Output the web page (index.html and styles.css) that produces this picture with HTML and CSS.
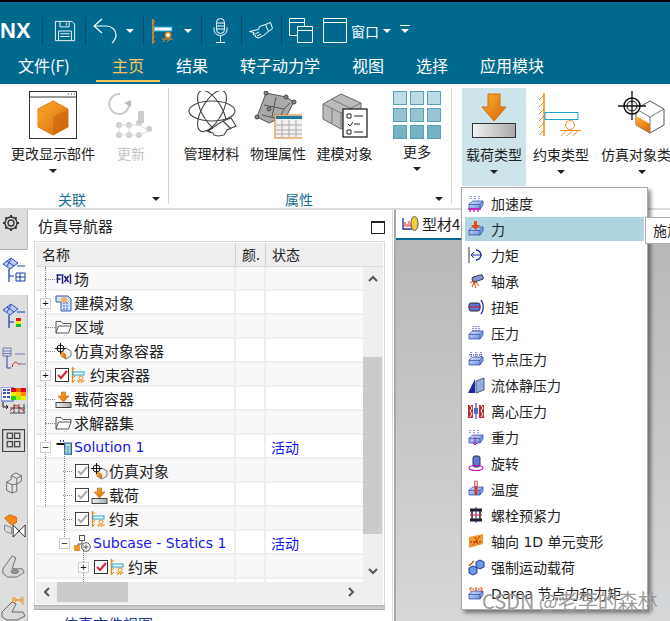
FILE: index.html
```html
<!DOCTYPE html>
<html lang="zh">
<head>
<meta charset="utf-8">
<title>NX</title>
<link rel="stylesheet" href="styles.css">
</head>
<body>
<svg class="defs" width="0" height="0">
  <defs>
    <linearGradient id="gOrange" x1="0" y1="0" x2="1" y2="1"><stop offset="0" stop-color="#fbb02a"/><stop offset="1" stop-color="#d9640c"/></linearGradient>
    <linearGradient id="gGray" x1="0" y1="0" x2="1" y2="0"><stop offset="0" stop-color="#f2f2f2"/><stop offset="1" stop-color="#a9a9a9"/></linearGradient>
    <linearGradient id="gBlue" x1="0" y1="0" x2="1" y2="1"><stop offset="0" stop-color="#dfe8fb"/><stop offset="1" stop-color="#5e80d6"/></linearGradient>
    <symbol id="box" viewBox="0 0 16 16"><path d="M1 9 5 6h10v4l-3 4H1z" fill="url(#gBlue)" stroke="#3355aa" stroke-width=".8"/><path d="M1 9.500h11l3-3.500M12 9.500V14" fill="none" stroke="#3355aa" stroke-width=".8"/></symbol>
    <symbol id="tcheck" viewBox="0 0 15 15"><rect x=".5" y=".5" width="13" height="13" fill="#fff" stroke="#333"/><path d="M3 7l3 3 6-7" fill="none" stroke="#e0203a" stroke-width="2.200"/></symbol>
    <symbol id="gcheck" viewBox="0 0 15 15"><rect x=".5" y=".5" width="13" height="13" fill="#fff" stroke="#444"/><path d="M3 7l3 3 6-7" fill="none" stroke="#b0b0b0" stroke-width="2.200"/></symbol>
    <symbol id="constraint" viewBox="0 0 15 17"><path d="M1.500 0v16" stroke="#ee8a1c" stroke-width="1.400"/><path d="M1 4 4 1M1 8l3-3M1 12l3-3M1 16l3-3" stroke="#ee8a1c"/><rect x="2" y="5" width="11" height="3" fill="#fff" stroke="#18a5c8"/><circle cx="10" cy="11" r="2" fill="none" stroke="#ee8a1c"/><path d="M6 14h8M7 16l2-2M10 16l2-2" stroke="#ee8a1c"/></symbol>
    <symbol id="load" viewBox="0 0 17 17"><path d="M6.500 1h4v4H14l-5.500 6L3 5h3.500z" fill="url(#gOrange)" stroke="#c85f10" stroke-width=".6"/><rect x="1" y="11.500" width="15" height="5" fill="url(#gGray)" stroke="#444"/></symbol>
    <symbol id="folder" viewBox="0 0 17 14"><path d="M1 13V1.500h5l2 2h8V6M1 13l2.500-7H16l-2.500 7z" fill="#fff" stroke="#555"/></symbol>
    <symbol id="simobj" viewBox="0 0 17 17"><path d="M11 5l5 3v5l-5 3-5-3V8z" fill="#eee" stroke="#777"/><path d="M6 8l5 3v5l-5-3z" fill="url(#gOrange)"/><circle cx="5.500" cy="5.500" r="3.500" fill="#fff" stroke="#111"/><path d="M5.500 0v11M0 5.500h11" stroke="#111"/></symbol>
  </defs>
</svg>

<div class="app">
  <header class="topbar">
    <div class="quick">
      <span class="logo">NX</span><i class="qsep sep1"></i>
      <svg class="qi save" width="22" height="22" viewBox="0 0 24 24" fill="none" stroke="#fff"><path d="M1.500 1.500h18l3 3v18h-21z"/><path d="M6.500 1.500v6h10v-6M13.500 3v3M5 22V12h14v10M7 15h10M7 18h10"/></svg>
      <i class="qsep sep2"></i>
      <svg class="qi undo" width="24" height="26" viewBox="0 0 24 26" fill="none" stroke="#fff" stroke-width="1.200"><path d="M9 1 1 8l8 7M1 8h12c6 0 10 4 10 9 0 3-1 5-4 8"/></svg>
      <span class="caret wh c1"></span><i class="qsep sep3"></i>
      <svg class="qi qcon" width="23" height="26" viewBox="0 0 23 26"><path d="M2 1v24" stroke="#ef8a1d" stroke-width="1.500"/><path d="M1 6l3-3M1 11l3-3M1 16l3-3M1 21l3-3M1 26l3-3" stroke="#ef8a1d"/><rect x="3" y="9" width="18" height="4" fill="#fff" stroke="#12a8d8"/><circle cx="17" cy="17" r="2.500" fill="#fff" stroke="#ef8a1d" stroke-width="1.500"/><path d="M11 21h11M12 24l3-3M16 24l3-3" stroke="#ef8a1d"/></svg>
      <span class="caret wh c2"></span><i class="qsep sep4"></i>
      <svg class="qi mic" width="15" height="25" viewBox="0 0 15 25" fill="none" stroke="#fff"><rect x="3.500" y=".5" width="8" height="15" rx="4"/><path d="M3.500 5h8M3.500 8h8M3.500 11h8M1 9.500v2c0 3.500 3 6 6.500 6s6.500-2.500 6.500-6v-2M7.500 18v6M3 24.500h9"/></svg>
      <i class="qsep sep5"></i>
      <svg class="qi hand" width="24" height="17" viewBox="0 0 24 17" fill="none" stroke="#fff"><path d="M.5 9.500l9-2 1-3 6-2 3 7-5 4-5 2.500-3-1-.5-2-2-.5 1-2z"/><path d="M16.500 2.500l5-2 2 6-4 3M6 12l4-2M8 14l4-2"/></svg>
      <i class="qsep sep6"></i>
      <svg class="qi wins" width="24" height="25" viewBox="0 0 24 25" fill="#006a8e" stroke="#fff"><path d="M.5.500h15v17H.5zM.5 4.500h15"/><path d="M8.500 8.500h15v16h-15zM8.500 12.500h15"/></svg>
      <svg class="qi win" width="24" height="25" viewBox="0 0 24 25" fill="none" stroke="#fff"><path d="M.5.500h23v24H.5zM.5 4.500h23"/></svg>
      <span class="qtext">窗口</span>
      <span class="caret wh c3"></span>
      <span class="caret wh c4"></span>
    </div>
    <nav class="tabs">
      <span class="tab first">文件(F)</span>
      <span class="tab on">主页</span>
      <span class="tab">结果</span>
      <span class="tab">转子动力学</span>
      <span class="tab">视图</span>
      <span class="tab">选择</span>
      <span class="tab">应用模块</span>
    </nav>
  </header>

  <section class="ribbon">
    <div class="group g1">
      <div class="btns">
        <div class="rbtn w1">
          <svg class="ric" width="48" height="48" viewBox="0 0 48 48"><rect x=".5" y=".5" width="47" height="47" fill="#fff" stroke="#333"/><path d="M1 6h46" stroke="#333"/><path d="M39 3h1M42 3h1M45 3h1" stroke="#333"/><path d="M24 10l15 8v18l-15 8-15-8V18z" fill="url(#gOrange)" stroke="#e07a14"/><path d="M9 18l15 8 15-8M24 26v18" stroke="#e58a22" fill="none"/><path d="M24 26l15-8v18l-15 8z" fill="#c9620f" opacity=".6"/></svg>
          <span class="rlabel">更改显示部件</span><span class="caret"></span>
        </div>
        <div class="rbtn w2 dis">
          <svg class="ric" width="48" height="48" viewBox="0 0 48 48" fill="none"><path d="M22 11A10 10 0 1 1 13 3" stroke="#ccc" stroke-width="2"/><path d="M17 12l7-3 0 7z" fill="#bbb"/><g fill="#ccc"><circle cx="12" cy="34" r="3"/><circle cx="22" cy="34" r="3"/><circle cx="32" cy="32" r="3"/><circle cx="12" cy="44" r="3"/><circle cx="22" cy="44" r="3"/><circle cx="32" cy="44" r="3"/><circle cx="42" cy="38" r="3"/></g><path d="M12 34h20l10 6-10 4H12zM22 34v10" stroke="#ddd"/><rect x="31" y="20" width="6" height="12" fill="#ccc"/></svg>
          <span class="rlabel">更新</span>
        </div>
      </div>
      <div class="gfoot"><span class="gname n1">关联</span><span class="caret gc"></span></div>
    </div>
    <div class="group g2">
      <div class="btns">
        <div class="rbtn w3">
          <svg class="ric" width="50" height="48" viewBox="0 0 50 48" fill="none" stroke="#444" stroke-width="1.100"><ellipse cx="25" cy="20" rx="23" ry="10"/><ellipse cx="25" cy="20" rx="23" ry="10" transform="rotate(60 25 20)"/><ellipse cx="25" cy="20" rx="23" ry="10" transform="rotate(120 25 20)"/><path d="M21 40l10-7 5-3 8-3 5 8-9 4-3 5-6 1-4-1-1-2-4-1z" fill="#fff"/><path d="M26 37l-6 3 4 1M36 30l8 8"/></svg>
          <span class="rlabel">管理材料</span>
        </div>
        <div class="rbtn w4a">
          <svg class="ric" width="48" height="48" viewBox="0 0 48 48"><path d="M12 2 32 6l8 5-7 13-18 8-12-6z" fill="#aaa" stroke="#555"/><path d="M10 14l20 4 6-6M8 24l17 4 5-10M22 6l-4 20" stroke="#555" fill="none"/><g fill="#888" stroke="#444"><circle cx="12" cy="2" r="2"/><circle cx="32" cy="6" r="2"/><circle cx="40" cy="11" r="2"/><circle cx="3" cy="26" r="2"/><circle cx="15" cy="18" r="2"/></g><rect x="21" y="24" width="28" height="23" fill="#f1f1f1" stroke="#e07a24"/><rect x="22" y="25" width="26" height="3" fill="#1a7a9c"/><path d="M28 29v17M35 29v17M42 29v17M22 34h26M22 39h26M22 43h26" stroke="#aaa"/></svg>
          <span class="rlabel">物理属性</span>
        </div>
        <div class="rbtn w4">
          <svg class="ric" width="48" height="48" viewBox="0 0 48 48"><path d="M2 13 20 3l20 9v15L20 38 2 28z" fill="#bbb" stroke="#666"/><path d="M2 13l18 9 20-10M20 22v16M10 8l19 9M11 17v15M31 17v15" stroke="#777" fill="none"/><rect x="22" y="18" width="24" height="28" fill="#fff" stroke="#222" stroke-width="1.300"/><path d="M26 23h4v4h-4zM33 25h9M27 33l2 2 3-4M33 33h6M26 39h4v4h-4zM33 41h9" fill="none" stroke="#222"/></svg>
          <span class="rlabel">建模对象</span>
        </div>
        <div class="rbtn w5">
          <div class="ric more">
            <i></i><i></i><i></i><i class="m2"></i><i class="m2"></i><i class="m2"></i><i class="m3"></i><i class="m3"></i><i class="m3"></i>
          </div>
          <span class="rlabel up">更多</span><span class="caret"></span>
        </div>
      </div>
      <div class="gfoot"><span class="gname n2">属性</span><span class="caret gc"></span></div>
    </div>
    <div class="g3">
      <div class="rbtn w6 act">
        <svg class="ric" width="46" height="48" viewBox="0 0 46 48"><path d="M17 3h12v13h6L23 30 11 16h6z" fill="url(#gOrange)" stroke="#d46a10"/><rect x="1.500" y="32.500" width="43" height="14" fill="url(#gGray)" stroke="#333"/></svg>
        <span class="rlabel">载荷类型</span><span class="caret"></span>
      </div>
      <div class="rbtn w7">
        <svg class="ric" width="44" height="48" viewBox="0 0 44 48" fill="none"><path d="M5 2v43" stroke="#ef8a1d" stroke-width="1.500"/><path d="M0 9l5-5M0 16l5-5M0 23l5-5M0 30l5-5M0 37l5-5M0 44l5-5" stroke="#ef8a1d"/><rect x="6" y="21.500" width="33" height="7" fill="#fff" stroke="#18a5c8"/><circle cx="31" cy="34" r="4.500" stroke="#ef8a1d"/><path d="M21 39.500h21M22 45l5-5.500M28 45l5-5.500M34 45l5-5.500" stroke="#ef8a1d"/></svg>
        <span class="rlabel">约束类型</span><span class="caret"></span>
      </div>
      <div class="rbtn w8">
        <svg class="ric" width="48" height="48" viewBox="0 0 48 48" fill="none"><path d="M32 10l14 8v16l-14 8-14-8V18z" fill="#fff" stroke="#555"/><path d="M18 18l14 8 14-8M32 26v16" stroke="#777"/><path d="M18 25l14 8v9l-14-8z" fill="url(#gOrange)"/><circle cx="14" cy="15" r="8" fill="#fff" stroke="#111" stroke-width="1.500"/><circle cx="14" cy="15" r="5" stroke="#111"/><path d="M14 0v29M0 15h28" stroke="#111" stroke-width="1.300"/></svg>
        <span class="rlabel wide">仿真对象类</span><span class="caret"></span>
      </div>
    </div>
  </section>

  <main class="work">
    <aside class="rail">
      <div class="rtab gear"><svg width="18" height="18" viewBox="0 0 18 18" fill="none" stroke="#333" stroke-width="1.400"><circle cx="9" cy="9" r="3"/><circle cx="9" cy="9" r="6"/><path d="M9 1v2M9 15v2M1 9h2M15 9h2M3.400 3.400l1.400 1.400M13.200 13.200l1.400 1.400M3.400 14.600l1.400-1.400M13.200 4.800l1.400-1.400" stroke-width="2"/></svg></div>
      <div class="rtab sel"><svg width="24" height="26" viewBox="0 0 24 26" fill="none"><path d="M1 7l8-6 7 5-8 6z" fill="#b9c8f4" stroke="#2f4cc0"/><path d="M5 4l7 5M9 2 5 9" stroke="#2f4cc0"/><path d="M7 12v13M7 19h5M15 9h8" stroke="#1438a8" stroke-width="1.200"/><path d="M14 16h9v8h-9zM14 20h9M18 16v8" stroke="#1438a8"/></svg></div>
      <div class="rtab r3"><svg width="24" height="26" viewBox="0 0 24 26" fill="none"><path d="M1 7l8-6 7 5-8 6z" fill="#b9c8f4" stroke="#2f4cc0"/><path d="M5 4l7 5M9 2 5 9" stroke="#2f4cc0"/><path d="M7 12v13M7 19h5M15 9h8" stroke="#1438a8" stroke-width="1.200"/><path d="M14 15h5v3h-5z" fill="#e11"/><path d="M14 18h5v3h-5z" fill="#ee0"/><path d="M14 21h5v3h-5z" fill="#1b2"/></svg></div>
      <div class="rtab r4"><svg width="26" height="22" viewBox="0 0 26 22" fill="none"><path d="M2 1h8v8H2zM2 4h8M2 6.500h8M14 7h10M20 17h5" stroke="#6a7ab0"/><path d="M6 9v12h4" stroke="#2440b0"/><path d="M11 20c2-7 5-5 6-3h3" stroke="#b8282a"/></svg></div>
      <div class="rtab r5"><svg width="25" height="27" viewBox="0 0 25 27"><rect x="0" y="0" width="12" height="14" fill="#fff" stroke="#3355bb"/><path d="M2 3h8M2 6h8M2 10h8" stroke="#3355bb" stroke-width="2" stroke-dasharray="3 1"/><rect x="10" y="1" width="5" height="4" fill="#d02"/><rect x="15" y="1" width="5" height="4" fill="#e60"/><rect x="20" y="1" width="5" height="4" fill="#d02"/><rect x="10" y="5" width="5" height="4" fill="#ee0"/><rect x="15" y="5" width="5" height="4" fill="#fc0"/><rect x="20" y="5" width="5" height="4" fill="#f80"/><rect x="10" y="9" width="5" height="4" fill="#2c2"/><rect x="15" y="9" width="5" height="4" fill="#ae1"/><rect x="20" y="9" width="5" height="4" fill="#ee0"/><path d="M9 26h15M9 21h15M13 17v9M18 17v9M23 17v9" stroke="#444"/><path d="M9 24l6-6 4 3 4 3" stroke="#d11" fill="none"/><path d="M2 15v5h5M5 18l2 2-2 2" stroke="#111" fill="none"/></svg></div>
      <div class="rtab r6"><svg width="23" height="23" viewBox="0 0 22 22" fill="none" stroke="#444" stroke-width="1.200"><rect x=".6" y=".6" width="21" height="21"/><rect x="5" y="4" width="5" height="5"/><rect x="12" y="4" width="5" height="5"/><rect x="5" y="12" width="5" height="5"/><rect x="12" y="12" width="5" height="5"/></svg></div>
      <div class="rtab r7"><svg width="18" height="22" viewBox="0 0 18 24" fill="#e2e2e2" stroke="#666"><path d="M1 11 6 8V4l5-3 6 3v6l-5 3v8l-5 2-6-3z"/><path d="M6 4l6 3 5-3M12 7v6M1 11l6 3 5-1M7 14v9" fill="none"/></svg></div>
      <div class="rtab r8"><svg width="26" height="24" viewBox="0 0 26 28"><path d="M2 6l6-4 8 3v6l-6 3z" fill="#f2891a" stroke="#c56410"/><path d="M2 14l8 3v7l-6-2-2-2z" fill="#ddd" stroke="#777"/><path d="M12 14l14 14V14L12 28z" fill="#fff" stroke="#111"/></svg></div>
      <div class="rtab r9"><svg width="25" height="23" viewBox="0 0 25 25" fill="#d9d9d9" stroke="#666"><path d="M1 15 11 1l4 2-4 12 11 0 2 4-8 5H6l-5-4z"/><ellipse cx="14" cy="18" rx="4" ry="2" fill="#999"/></svg></div>
      <div class="rtab r10"><svg width="26" height="24" viewBox="0 0 26 24" fill="#d9d9d9" stroke="#666"><path d="M1 15 11 5l4 2-4 8 11 0 2 4-8 4H6l-5-3z"/><path d="M12 0v6M22 0v8M12 3h10M13 0l3 3-3 3M21 0l-3 3 3 3" stroke="#ef8a1d" fill="none"/></svg></div>
    </aside>

    <section class="nav">
      <div class="navhead"><span class="navtitle">仿真导航器</span><i class="maxi"></i></div>
      <div class="table">
        <div class="thead"><span class="c-name">名称</span><span class="c-col">颜.</span><span class="c-st">状态</span></div>
        <div class="tbody">
          <div class="rows">
            <div class="row alt"><div class="c-name tr l0"><i class="lnk"></i><svg width="17" height="12" viewBox="0 0 16 12" class="ico"><path d="M1 2h5M2 2v8M1 6h4M8 2H7v8h1M14 2h1v8h-1" stroke="#1c1c78" fill="none" stroke-width="1.400"/><path d="M9 3l4 6M13 3 9 9" stroke="#1c1c78" stroke-width="1.400"/></svg><span class="lbl">场</span></div><div class="c-col"></div><div class="c-st"></div></div>

            <div class="row"><div class="c-name tr l0"><b class="tog">+</b><svg width="17" height="17" viewBox="0 0 17 17" class="ico"><path d="M1 1h12l3 3v12H6V7H1z" fill="#cfe0fb" stroke="#3a5bb0"/><path d="M8 8h6M8 11h6M8 14h6" stroke="#3a5bb0" stroke-dasharray="2 1"/><circle cx="9" cy="5" r="3" fill="#f0b060"/></svg><span class="lbl">建模对象</span></div><div class="c-col"></div><div class="c-st"></div></div>

            <div class="row alt"><div class="c-name tr l0"><i class="lnk"></i><svg width="17" height="14" class="ico"><use href="#folder"/></svg><span class="lbl">区域</span></div><div class="c-col"></div><div class="c-st"></div></div>

            <div class="row"><div class="c-name tr l0"><i class="lnk"></i><svg width="17" height="17" class="ico"><use href="#simobj"/></svg><span class="lbl">仿真对象容器</span></div><div class="c-col"></div><div class="c-st"></div></div>

            <div class="row alt"><div class="c-name tr l0"><b class="tog">+</b><svg width="15" height="15" class="ico chk"><use href="#tcheck"/></svg><svg width="15" height="17" class="ico"><use href="#constraint"/></svg><span class="lbl lp">约束容器</span></div><div class="c-col"></div><div class="c-st"></div></div>

            <div class="row"><div class="c-name tr l0"><i class="lnk"></i><svg width="17" height="17" class="ico"><use href="#load"/></svg><span class="lbl">载荷容器</span></div><div class="c-col"></div><div class="c-st"></div></div>

            <div class="row alt"><div class="c-name tr l0"><i class="lnk"></i><svg width="17" height="14" class="ico"><use href="#folder"/></svg><span class="lbl">求解器集</span></div><div class="c-col"></div><div class="c-st"></div></div>

            <div class="row"><div class="c-name tr l0"><b class="tog minus">−</b><svg width="17" height="16" viewBox="0 0 16 16" class="ico"><path d="M1 5h8" stroke="#111" stroke-width="2"/><path d="M5 1v2M8 1v2" stroke="#2244bb"/><rect x="9" y="4" width="7" height="12" fill="#7fb6c8" stroke="#1a6a8a"/><path d="M10.500 6h4M10.500 9h1M13.500 9h1M10.500 12h1M13.500 12h1" stroke="#fff"/></svg><span class="lbl blue">Solution 1</span></div><div class="c-col"></div><div class="c-st blue">活动</div></div>

            <div class="row alt"><div class="c-name tr l1"><i class="lnk"></i><svg width="15" height="15" class="ico chk"><use href="#gcheck"/></svg><svg width="17" height="17" class="ico"><use href="#simobj"/></svg><span class="lbl ls">仿真对象</span></div><div class="c-col"></div><div class="c-st"></div></div>

            <div class="row"><div class="c-name tr l1"><i class="lnk"></i><svg width="15" height="15" class="ico chk"><use href="#gcheck"/></svg><svg width="17" height="17" class="ico"><use href="#load"/></svg><span class="lbl ls">载荷</span></div><div class="c-col"></div><div class="c-st"></div></div>

            <div class="row alt"><div class="c-name tr l1"><i class="lnk"></i><svg width="15" height="15" class="ico chk"><use href="#gcheck"/></svg><svg width="15" height="17" class="ico"><use href="#constraint"/></svg><span class="lbl lq">约束</span></div><div class="c-col"></div><div class="c-st"></div></div>

            <div class="row"><div class="c-name tr l2"><b class="tog minus">−</b><svg width="17" height="17" viewBox="0 0 17 17" class="ico" fill="none"><rect x="5.500" y=".5" width="5" height="5" stroke="#555"/><path d="M8 6v3H4v2" stroke="#555"/><rect x="0" y="10" width="6" height="6" fill="#f0962a"/><circle cx="12" cy="12" r="4.300" stroke="#555"/><path d="M12 9.500v5M9.500 12h5" stroke="#555"/></svg><span class="lbl blue">Subcase - Statics 1</span></div><div class="c-col"></div><div class="c-st blue">活动</div></div>

            <div class="row alt"><div class="c-name tr l3"><b class="tog">+</b><svg width="15" height="15" class="ico chk"><use href="#tcheck"/></svg><svg width="15" height="17" class="ico"><use href="#constraint"/></svg><span class="lbl lq">约束</span></div><div class="c-col"></div><div class="c-st"></div></div>
            <div class="row"><div class="c-name"></div><div class="c-col"></div><div class="c-st"></div></div>
            <i class="vguide v0"></i><i class="vguide v1"></i><i class="vguide v2"></i>
          </div>
          <div class="vscroll"><svg width="10" height="7" viewBox="0 0 10 7" class="sa t"><path d="M1 6l4-4 4 4" fill="none" stroke="#555" stroke-width="2"/></svg><i class="thumbv"></i><svg width="10" height="7" viewBox="0 0 10 7" class="sa b"><path d="M1 1l4 4 4-4" fill="none" stroke="#555" stroke-width="2"/></svg></div>
          <div class="hscroll"><svg width="7" height="10" viewBox="0 0 7 10"><path d="M6 1 2 5l4 4" fill="none" stroke="#555" stroke-width="2"/></svg><i class="thumbh"></i><svg width="7" height="10" viewBox="0 0 7 10"><path d="M1 1l4 4-4 4" fill="none" stroke="#555" stroke-width="2"/></svg></div>
        </div>
      </div>
      <div class="split"></div>
      <div class="navfoot">仿真文件视图</div>
    </section>

    <section class="view">
      <div class="vtab"><svg width="17" height="15" viewBox="0 0 17 15" class="vico"><path d="M1 2v11h9" stroke="#1c2a90" fill="none" stroke-width="1.300"/><path d="M3 11V6M5 11V8M7 11V5M9 11V7" stroke="#d22"/><ellipse cx="12.500" cy="7.500" rx="3.500" ry="7" fill="#f3cf3a" stroke="#555"/></svg><span>型材4</span></div>
      <div class="canvas"></div>
    </section>
  </main>

  <div class="menu">
    <div class="mi"><svg width="16" height="18" viewBox="0 0 16 16"><use href="#box"/><path d="M3 1v4M7 1v4M11 1v4" stroke="#2244bb" stroke-dasharray="1 1"/><path d="M2 14v3M6 14v3M10 14v3M0 14h13" stroke="#d010b0" stroke-width="1.300"/></svg><span>加速度</span></div>
    <div class="mi cur"><svg width="16" height="18" viewBox="0 0 16 16"><use href="#box"/><path d="M6 0h3v4h3L7.500 9 3 4h3z" fill="#e8491a"/></svg><span>力</span></div>
    <div class="mi"><svg width="16" height="18" viewBox="0 0 16 16" fill="none"><path d="M1 0v16" stroke="#999" stroke-width="2"/><path d="M4 8h10M6 5l-3 3 3 3" stroke="#1a2aa0"/><path d="M8 3a5 5 0 1 1 0 10" stroke="#1a2aa0" stroke-width="1.300"/></svg><span>力矩</span></div>
    <div class="mi"><svg width="16" height="18" viewBox="0 0 16 16" fill="none"><rect x="4" y="3" width="11" height="5" rx="2" fill="#7f97d8" stroke="#334" transform="rotate(-18 9 5)"/><path d="M2 10l3-2 3 2M4 14l2-5 2 6M11 13 8 9" stroke="#d04a1a"/></svg><span>轴承</span></div>
    <div class="mi"><svg width="16" height="18" viewBox="0 0 16 16" fill="none"><rect x="1" y="4" width="11" height="8" rx="2" fill="#5d73cf" stroke="#233"/><path d="M0 8h13" stroke="#d01a2a"/><path d="M13 1c3 4 3 10 0 14" stroke="#1a2aa0" stroke-width="1.300"/></svg><span>扭矩</span></div>
    <div class="mi"><svg width="16" height="18" viewBox="0 0 16 16"><use href="#box"/><path d="M5 1v5M8 1v5M11 1v5" stroke="#1a2aa0" stroke-dasharray="1 1"/></svg><span>压力</span></div>
    <div class="mi"><svg width="16" height="18" viewBox="0 0 16 16"><use href="#box"/><path d="M3 1v6M8 1v6M13 1v6M1 4h14" stroke="#1a2aa0" stroke-dasharray="1 1"/></svg><span>节点压力</span></div>
    <div class="mi"><svg width="16" height="18" viewBox="0 0 16 16"><path d="M8 4l8-3v12l-8 3z" fill="#8fb0dc" stroke="#557"/><path d="M0 16 7 2v14z" fill="#1a2a9a"/></svg><span>流体静压力</span></div>
    <div class="mi"><svg width="16" height="18" viewBox="0 0 16 16"><path d="M0 2h5v13H0zM11 2h5v13h-5z" fill="#b23030"/><path d="M2 14l2-3-2-3 2-3-2-3M13 14l2-3-2-3 2-3-2-3" stroke="#fff" fill="none"/><path d="M8 0v16" stroke="#1a2aa0"/><rect x="6" y="5" width="4" height="6" fill="#4a6ad0"/></svg><span>离心压力</span></div>
    <div class="mi"><svg width="16" height="18" viewBox="0 0 16 16"><use href="#box"/><path d="M2 1v4M6 1v4M10 1v4" stroke="#2244bb" stroke-dasharray="1 1"/><path d="M7 8v8M5 14l2 2 2-2" stroke="#c010a0" fill="none"/></svg><span>重力</span></div>
    <div class="mi"><svg width="16" height="18" viewBox="0 0 16 16" fill="none"><rect x="5" y="1" width="7" height="11" rx="2" fill="#6078d8" stroke="#334"/><ellipse cx="8" cy="13" rx="7" ry="2.500" stroke="#c010c0" stroke-width="1.200"/></svg><span>旋转</span></div>
    <div class="mi"><svg width="16" height="18" viewBox="0 0 16 16"><use href="#box"/><rect x="6.500" y="0" width="3" height="12" fill="#f0c0c0" stroke="#a44" stroke-width=".6"/><path d="M8 5v9" stroke="#d01020" stroke-width="1.500"/></svg><span>温度</span></div>
    <div class="mi"><svg width="16" height="18" viewBox="0 0 16 16" fill="none"><path d="M2 3h12M2 13h12" stroke="#222" stroke-width="3"/><rect x="4" y="3" width="8" height="10" stroke="#222" stroke-width="1.500"/><path d="M8 0v16" stroke="#1a2aa0"/><path d="M2 8h12" stroke="#d01a2a"/></svg><span>螺栓预紧力</span></div>
    <div class="mi"><svg width="16" height="18" viewBox="0 0 16 16"><path d="M1 4l14-3v10L1 15z" fill="#f09a2a"/><path d="M2 9h12M7 4l3 7M5 12l7-9" stroke="#c01a0a" stroke-dasharray="2 1"/></svg><span>轴向 1D 单元变形</span></div>
    <div class="mi"><svg width="16" height="18" viewBox="0 0 16 16"><path d="M1 9l4-2 4 2v5l-4 2-4-2zM8 3l4-2 4 2v5l-4 2-4-2z" fill="#6d9ae8" stroke="#223a90"/><path d="M1 7l5-5" stroke="#e04a10" stroke-width="1.500"/></svg><span>强制运动载荷</span></div>
    <div class="mi"><svg width="16" height="18" viewBox="0 0 16 16"><use href="#box"/><path d="M3 2v6M8 2v6M13 2v6M1 4h14" stroke="#d8400a" stroke-dasharray="2 1"/></svg><span>Darea 节点力和力矩</span></div>
  </div>
  <div class="tip">施加</div>
  <div class="mark">CSDN @老李的森林</div>
</div>
</body>
</html>
```
FILE: styles.css
```css
* { box-sizing: border-box; }
html, body { margin: 0; padding: 0; }
body { width: 670px; height: 621px; overflow: hidden; background: #fff; font-family: "Noto Sans CJK SC", "Liberation Sans", sans-serif; font-size: 14px; color: #222; }
i { display: block; font-style: normal; }
.defs { position: absolute; }
.app { position: relative; width: 670px; height: 621px; overflow: hidden; display: flex; flex-direction: column; }

.topbar { flex: none; height: 84px; background: #006a8e; border-top: 2px solid #000; color: #fff; }
.quick { height: 48px; display: flex; align-items: center; padding-top: 9px; }
.logo { width: 42px; flex: none; font: bold 22px "Liberation Sans", sans-serif; color: #fff; line-height: 24px; }
.qsep { width: 1px; height: 28px; background: #0a4a63; flex: none; }
.qi { flex: none; }
.save { margin-left: 11px; }
.sep2 { margin-left: 9px; }
.undo { margin-left: 7px; }
.c1 { margin-left: 9px; }
.sep3 { margin-left: 9px; }
.qcon { margin-left: 7px; }
.c2 { margin-left: 10px; }
.sep4 { margin-left: 9px; }
.mic { margin-left: 11px; }
.sep5 { margin-left: 13px; }
.hand { margin-left: 7px; }
.sep6 { margin-left: 8px; }
.wins { margin-left: 7px; }
.win { margin-left: 10px; }
.qtext { margin-left: 4px; font-size: 14px; color: #fff; line-height: 20px; flex: none; }
.c3 { margin-left: 4px; }
.c4 { margin-left: 10px; position: relative; }
.c4::before { content: ""; position: absolute; left: -5px; top: -8px; width: 10px; height: 1px; background: #fff; }

.caret { display: block; flex: none; width: 0; height: 0; border-left: 4px solid transparent; border-right: 4px solid transparent; border-top: 4px solid #222; }
.caret.wh { border-top-color: #fff; }

.tabs { height: 34px; display: flex; }
.tab { flex: none; padding: 0 16px; font-size: 16px; line-height: 30px; color: #fff; height: 32px; }
.tab.first { width: 96px; padding: 0 0 0 18px; white-space: nowrap; }
.tab.on { color: #f7c65a; border-bottom: 2px solid #f7c65a; }

.ribbon { flex: none; height: 124px; display: flex; background: #fff; padding-top: 4px; }
.group { flex: none; display: flex; flex-direction: column; border-right: 1px solid #d5d5d5; height: 116px; position: relative; }
.g1 { width: 169px; }
.g2 { width: 283px; }
.g3 { display: flex; flex: none; margin-left: 10px; }
.btns { display: flex; height: 98px; flex: none; }
.rbtn { display: flex; flex-direction: column; align-items: center; height: 98px; flex: none; }
.rbtn .ric { height: 48px; margin-top: 3px; flex: none; }
.rlabel { display: block; margin-top: 4px; height: 20px; line-height: 20px; font-size: 14px; white-space: nowrap; color: #222; }
.rlabel.up { margin-top: 2px; }
.rbtn .caret { margin-top: 6px; }
.w1 { width: 106px; }
.w2 { width: 50px; }
.dis .rlabel { color: #c4c4c4; }
.w3 { width: 57px; margin-left: 14px; }
.w4a { width: 66px; margin-left: 5px; }
.w4 { width: 67px; }
.w5 { width: 70px; margin-left: 4px; }
.w6 { width: 64px; background: #cde4ea; }
.w7 { width: 70px; }
.w8 { width: 90px; margin-left: 1px; }
.g3 .rlabel { margin-top: 5px; }
.g3 .rlabel.wide { margin-left: -12px; }
.more { display: grid; grid-template-columns: repeat(3, 14px); grid-auto-rows: 14px; gap: 3px; width: 48px; height: 48px; }
.more i { background: #bcdbe6; border: 1px solid #58a0b8; }
.more i.m2 { background: #97c5d5; }
.more i.m3 { background: #76b1c6; }
.gfoot { flex: none; height: 18px; margin-top: 4px; display: flex; align-items: center; position: relative; }
.gname { color: #1a6e92; font-size: 14px; line-height: 18px; }
.n1 { margin-left: 58px; }
.n2 { margin-left: 116px; }
.gc { position: absolute; right: 8px; top: 7px; }

.work { flex: 1; display: flex; border-top: 2px solid #dcdcdc; min-height: 0; background: #fff; }
.rail { width: 28px; flex: none; background: #dedede; border-right: 1px solid #b9b9b9; display: flex; flex-direction: column; }
.rtab { display: flex; justify-content: center; flex: none; padding-top: 2px; }
.gear { height: 40px; padding-top: 4px; border-bottom: 1px solid #b0b0b0; padding-right: 5px; }
.sel { height: 45px; background: #fff; margin-right: -1px; padding-top: 7px; padding-right: 1px; }
.r3 { height: 43px; padding-top: 8px; }
.r4 { height: 47px; padding-top: 9px; }
.r5 { height: 42px; }
.r6 { height: 43px; }
.r7 { height: 41px; }
.r8 { height: 42px; }
.r9 { height: 42px; }
.r10 { height: 26px; }

.nav { width: 365px; flex: none; display: flex; flex-direction: column; border-right: 1px solid #dcdcdc; padding-left: 6px; padding-right: 7px; }
.navhead { flex: none; height: 31px; display: flex; align-items: center; justify-content: space-between; padding: 0 0 0 4px; }
.navtitle { font-size: 15px; line-height: 20px; color: #222; }
.maxi { width: 14px; height: 13px; border: 1px solid #222; border-top-width: 2px; margin-top: 3px; }
.table { flex: none; width: 351px; height: 364px; border: 1px solid #d9d9d9; border-bottom: 0; padding: 1px 1px 0; }
.thead { display: flex; height: 24px; background: #eeeeee; border-bottom: 1px solid #dadada; line-height: 22px; font-size: 14px; }
.thead .c-name { padding-left: 6px; border-right: 1px solid #cfcfcf; }
.thead .c-col { border-right: 1px solid #cfcfcf; padding-left: 6px; }
.thead .c-st { padding-left: 6px; flex: 1; }
.c-name { width: 200px; flex: none; }
.c-col { width: 30px; flex: none; }
.c-st { width: 97px; flex: none; }
.tbody { position: relative; height: 337px; display: grid; grid-template-columns: 327px 20px; grid-template-rows: 315px 20px; background: #eee; }
.rows { position: relative; overflow: hidden; background: #fff; }
.row { display: flex; height: 24px; border-bottom: 2px solid #eeeeee; background: #fff; }
.row.alt { background: #f8f8f8; }
.row .c-name { border-right: 2px solid #eee; }
.row .c-col { border-right: 2px solid #eee; }
.row .c-st { padding-left: 5px; line-height: 24px; }
.tr { display: flex; align-items: center; position: relative; white-space: nowrap; padding-top: 2px; }
.l0 { padding-left: 4px; }
.l1 { padding-left: 22px; }
.l2 { padding-left: 23px; }
.l3 { padding-left: 42px; }
.lnk { width: 10px; height: 1px; flex: none; margin-left: 5px; border-top: 1px dotted #888; }
.l1 .lnk { width: 9px; margin-right: 3px; }
.tog { width: 11px; height: 11px; flex: none; background: #fff; border: 1px solid #ccc; color: #111; font: normal 11px/9px "Liberation Sans", sans-serif; text-align: center; margin-right: 4px; position: relative; z-index: 1; }
.l3 .tog { margin-right: 5px; }
.ico { flex: none; }
.chk { margin-right: 1px; }
.lbl { margin-left: 2px; font-size: 15px; line-height: 20px; color: #222; }
.lp { margin-left: 4px; }
.lq { margin-left: 3px; }
.ls { margin-left: 1px; }
.lbl.blue { color: #1414ee; font-family: "DejaVu Sans", sans-serif; font-size: 14px; }
.c-st.blue { font-size: 14px; color: #1414ee; }
.vguide { position: absolute; width: 0; border-left: 1px dotted #888; }
.v0 { left: 9px; top: 0; height: 240px; }
.v1 { left: 28px; top: 182px; height: 96px; }
.v2 { left: 47px; top: 278px; height: 37px; }
.vscroll { grid-column: 2; grid-row: 1; position: relative; background: #efefef; }
.thumbv { position: absolute; left: 0; right: 1px; top: 90px; height: 177px; background: #cbcbcb; }
.sa { position: absolute; left: 5px; }
.sa.t { top: 8px; }
.sa.b { top: 301px; }
.hscroll { grid-column: 1 / 3; grid-row: 2; display: flex; align-items: center; padding: 0 28px 0 7px; justify-content: space-between; position: relative; background: #efefef; }
.thumbh { position: absolute; left: 21px; top: 0; width: 71px; height: 20px; background: #cbcbcb; }

.split { flex: none; height: 5px; width: 351px; background: #c9c9c9; border: 1px solid #aaa; border-left: 0; border-right: 0; }
.navfoot { flex: none; padding-left: 29px; font-size: 15px; line-height: 20px; margin-top: 4px; color: #1a3a8a; white-space: nowrap; }

.view { flex: 1; display: flex; flex-direction: column; border-left: 2px solid #a8a8a8; min-width: 0; margin-left: 1px; }
.vtab { height: 30px; flex: none; display: flex; align-items: center; gap: 3px; padding-left: 6px; padding-bottom: 2px; border-bottom: 2px solid #006a8e; white-space: nowrap; font-size: 15px; }
.canvas { flex: 1; background: linear-gradient(#b7b8ba, #d6d7d9); }

.menu { position: absolute; left: 461px; top: 187px; width: 187px; height: 423px; background: #fff; border: 1px solid #a8a8a8; padding: 2px 3px 3px; box-shadow: 3px 3px 4px rgba(0,0,0,.45); }
.mi { display: flex; align-items: center; height: 26px; padding-left: 3px; gap: 7px; white-space: nowrap; font-family: "DejaVu Sans", "Noto Sans CJK SC", sans-serif; font-size: 14px; color: #222; }
.mi svg { flex: none; overflow: visible; }
.mi.cur { background: #aed5e0; height: 24px; margin: 1px 0; }
.tip { position: absolute; left: 645px; top: 217px; width: 40px; height: 27px; background: #fff; border: 1px solid #aaa; padding-left: 7px; line-height: 25px; font-size: 14px; color: #222; }
.mark { position: absolute; left: 482px; top: 589px; font-size: 20px; line-height: 24px; color: rgba(110,110,110,.7); white-space: nowrap; text-shadow: 0 0 1px rgba(255,255,255,.8); }
```
